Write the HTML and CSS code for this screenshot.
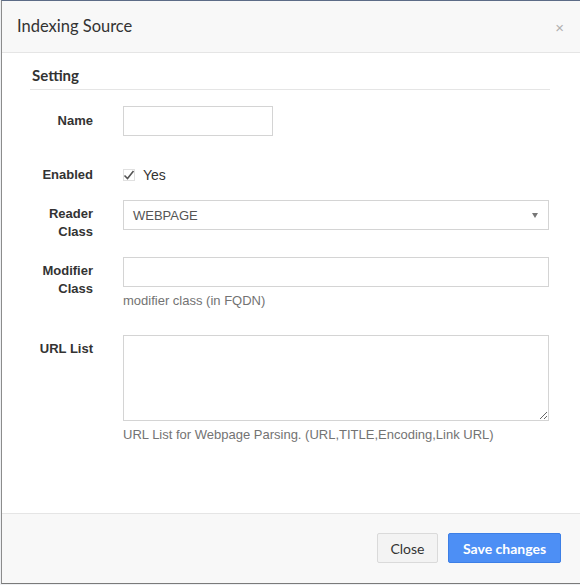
FILE: index.html
```html
<!DOCTYPE html>
<html lang="en">
<head>
    <meta charset="UTF-8">
    <title>Indexing Source</title>
    <link rel="stylesheet" href="styles.css">
</head>
<body>

<div class="modal">
    <div class="modal-header">
        <h4 class="modal-title">Indexing Source</h4>
        <span class="close">&times;</span>
    </div>
    <div class="modal-body">
        <div class="legend">Setting</div>

        <div class="form-row row-name">
            <label>Name</label>
            <div class="control">
                <input type="text" class="input-short">
            </div>
        </div>

        <div class="form-row row-enabled">
            <label>Enabled</label>
            <div class="control check-line">
                <span class="checkbox">
                    <svg width="12" height="12" viewBox="0 0 12 12"><path d="M1.5 6.5 L4.5 9.5 L10.5 2" fill="none" stroke="#555" stroke-width="1.6"/></svg>
                </span>
                <span>Yes</span>
            </div>
        </div>

        <div class="form-row row-reader">
            <label>Reader<br>Class</label>
            <div class="control">
                <div class="select">
                    <span>WEBPAGE</span>
                    <span class="caret"></span>
                </div>
            </div>
        </div>

        <div class="form-row row-modifier">
            <label>Modifier<br>Class</label>
            <div class="control">
                <input type="text">
                <div class="help">modifier class (in FQDN)</div>
            </div>
        </div>

        <div class="form-row row-url">
            <label>URL List</label>
            <div class="control">
                <textarea></textarea>
                <div class="help">URL List for Webpage Parsing. (URL,TITLE,Encoding,Link URL)</div>
            </div>
        </div>
    </div>
    <div class="modal-footer">
        <button class="btn btn-default">Close</button>
        <button class="btn btn-primary">Save changes</button>
    </div>
</div>

</body>
</html>
```

FILE: styles.css
```css
html, body {
    margin: 0;
    padding: 0;
    height: 585px;
    overflow: hidden;
    background-color: #eef0f3;
}
.modal {
    margin-left: 1px;
    width: 579px;
    height: 582px;
    background-color: white;
    border-top: 1px solid #5d6c87;
    border-left: 1px solid #8c8c8c;
    border-bottom: 1px solid #7a7a7a;
    display: flex;
    flex-direction: column;
    font-family: "Liberation Sans", Arial, sans-serif;
    font-size: 13px;
    color: #333;
}
.modal-header {
    height: 51px;
    background-color: #f8f8f8;
    border-bottom: 1px solid #e5e5e5;
    display: flex;
    align-items: center;
    justify-content: space-between;
    padding: 0 16px 0 15px;
    box-sizing: content-box;
}
.modal-title {
    margin: 0;
    font-family: Lato, "Open Sans", sans-serif;
    font-weight: normal;
    font-size: 16.5px;
    color: #333;
    padding-bottom: 1px;
}
.close {
    color: #b0b0b0;
    font-size: 15px;
    margin-right: 1px;
    margin-top: 2px;
}
.modal-body {
    flex: 1;
    padding: 11px 32px 0 26px;
}
.legend {
    font-family: Lato, "Open Sans", sans-serif;
    font-weight: bold;
    font-size: 15px;
    line-height: 22px;
    color: #333;
    margin-left: 2px;
    margin-right: -1px;
    padding: 0 0 3px 2px;
    border-bottom: 1px solid #e5e5e5;
    margin-bottom: 16px;
}
.form-row {
    display: grid;
    grid-template-columns: 65px 1fr;
    column-gap: 30px;
}
.form-row label {
    font-weight: bold;
    text-align: right;
    line-height: 18px;
    padding-top: 6px;
}
.row-name { margin-bottom: 29px; }
.row-enabled { margin-bottom: 15px; }
.row-enabled label { padding-top: 1px; }
.row-reader { margin-bottom: 16px; }
.row-reader label { padding-top: 5px; }
.row-modifier { margin-bottom: 25px; }
.row-modifier label { padding-top: 5px; }
.row-url label { padding-top: 5px; }

input, textarea, .select {
    box-sizing: border-box;
    width: 100%;
    border: 1px solid #d4d4d4;
    font-family: "Liberation Sans", Arial, sans-serif;
    font-size: 13px;
    color: #555;
    margin: 0;
    display: block;
}
input {
    height: 30px;
    padding: 0 10px;
}
.input-short {
    width: 150px;
}
textarea {
    height: 86px;
    resize: vertical;
}
.select {
    height: 30px;
    padding: 0 9px;
    display: flex;
    align-items: center;
    justify-content: space-between;
}
.caret {
    width: 0;
    height: 0;
    border-left: 3px solid transparent;
    border-right: 3px solid transparent;
    border-top: 5px solid #777;
    margin-right: 1px;
}
.check-line {
    display: flex;
    align-items: center;
    height: 20px;
    gap: 8px;
    font-size: 14px;
}
.checkbox {
    width: 12px;
    height: 12px;
    border: 1px solid #e0e0e0;
    box-sizing: border-box;
    display: flex;
    align-items: center;
    justify-content: center;
}
.checkbox svg {
    display: block;
    flex: none;
}
.help {
    color: #737373;
    margin-top: 5px;
    line-height: 18px;
}
.modal-footer {
    height: 68px;
    background-color: #f8f8f8;
    border-top: 1px solid #e5e5e5;
    display: flex;
    justify-content: flex-end;
    align-items: center;
    gap: 10px;
    padding: 0 20px 1px 0;
}
.btn {
    height: 30px;
    font-family: Lato, "Open Sans", sans-serif;
    font-size: 14px;
    border-radius: 2px;
    padding: 0 12px;
    cursor: pointer;
}
.btn-default {
    width: 61px;
    background-color: #f3f3f3;
    border: 1px solid #dadada;
    color: #333;
}
.btn-primary {
    width: 113px;
    background-color: #4d8ff5;
    border: 1px solid #3d7fe6;
    color: white;
    font-weight: bold;
}
```
